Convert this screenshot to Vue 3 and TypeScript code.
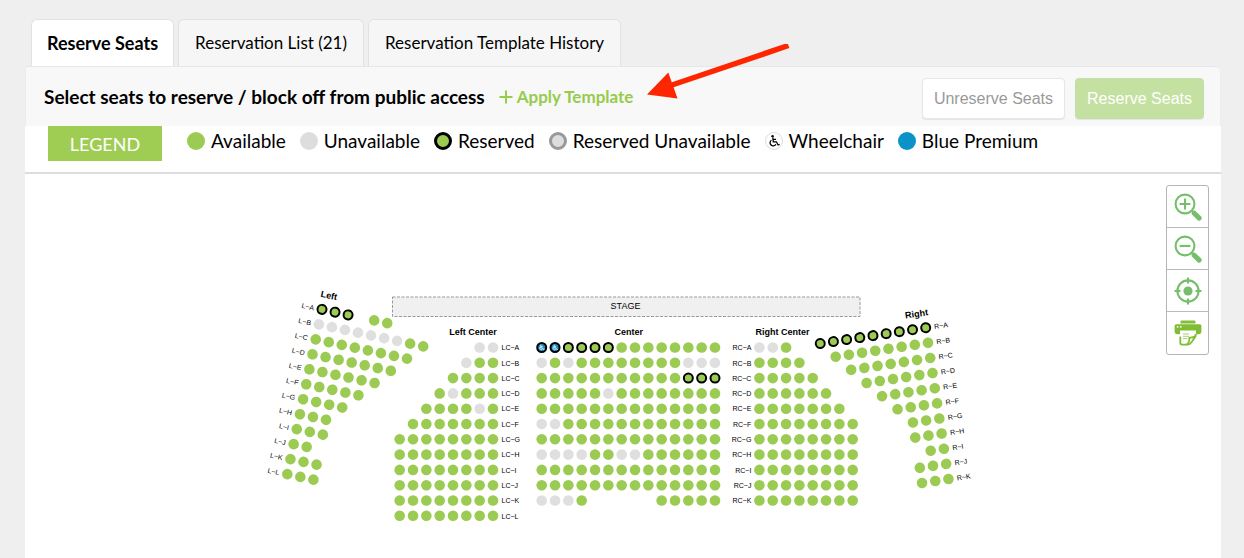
<script setup lang="ts">
import { ref } from 'vue'

type SeatKind = 'g' | 'u' | 'r' | 'w'
interface Seat { x: number; y: number; kind: SeatKind }
interface RowLabel { x: number; y: number; text: string }
interface Section {
  title: string
  titleX: number
  titleY: number
  transform: string
  anchor: 'start' | 'end'
  seats: Seat[]
  labels: RowLabel[]
}
interface SectionSpec {
  title: string
  titleX: number
  titleY: number
  x: number
  y: number
  angle: number
  prefix: string
  labelX: number
  anchor: 'start' | 'end'
  alignRight?: boolean
  rows: string[]
}

const SEAT_STEP = 13.33
const ROW_STEP = 15.3

// Row strings: g available, u unavailable, r reserved, w reserved wheelchair, . aisle
const specs: SectionSpec[] = [
  {
    title: 'Left', titleX: 4, titleY: -12, x: 322, y: 309.4, angle: 11.9,
    prefix: 'L', labelX: -8, anchor: 'end',
    rows: ['rrr.gg', 'uuuuuuugg', 'gggggggg', 'ggggggg', 'gggggg', 'ggggg', 'gggg', 'ggg', 'ggg', 'gg', 'ggg', 'ggg'],
  },
  {
    title: 'Left Center', titleX: -20, titleY: -12.5, x: 493, y: 347.5, angle: 0,
    prefix: 'LC', labelX: 8.5, anchor: 'start', alignRight: true,
    rows: ['uu', 'ugg', 'gggg', 'guggg', 'ggggug', 'ggggggg', 'gggggggg', 'gggggggg', 'gggggggg', 'gggggggg', 'gggggggg', 'gggggggg'],
  },
  {
    title: 'Center', titleX: 87, titleY: -12.5, x: 541.7, y: 347.5, angle: 0,
    prefix: '', labelX: 0, anchor: 'start',
    rows: ['wwrrrrgggggggg', 'ugugggggggguuu', 'gggggggggggrrr', 'gggggugggggggg', 'gggggggggggggg', 'uugggggggggggg', 'gggggggggggggg', 'uuuugguugggggg', 'gggggggggggggg', 'gggggggggggggg', 'uuug.....ggggg'],
  },
  {
    title: 'Right Center', titleX: 23, titleY: -12.5, x: 759.4, y: 347.5, angle: 0,
    prefix: 'RC', labelX: -8, anchor: 'end',
    rows: ['uug', 'gggg', 'ggggg', 'gggggg', 'ggggggg', 'gggggggg', 'gggggggg', 'gggggggg', 'gggggggg', 'gggggggg', 'gggggggg'],
  },
  {
    title: 'Right', titleX: -7, titleY: -12, x: 925.7, y: 327.7, angle: -8.55,
    prefix: 'R', labelX: 8.5, anchor: 'start', alignRight: true,
    rows: ['rrrrrrrrr', 'gggggggg', 'ggggggg', 'gggggg', 'ggggg', 'gggg', 'ggg', 'ggg', 'gg', 'ggg', 'ggg'],
  },
]

const sections: Section[] = specs.map((s) => {
  const seats: Seat[] = []
  const labels: RowLabel[] = []
  s.rows.forEach((row, i) => {
    const y = i * ROW_STEP
    row.split('').forEach((c, j) => {
      if (c === '.') return
      const col = s.alignRight ? j - row.length + 1 : j
      seats.push({ x: col * SEAT_STEP, y, kind: c as SeatKind })
    })
    if (s.prefix) labels.push({ x: s.labelX, y: y + 2.7, text: `${s.prefix}~${String.fromCharCode(65 + i)}` })
  })
  return {
    title: s.title, titleX: s.titleX, titleY: s.titleY, anchor: s.anchor, seats, labels,
    transform: `translate(${s.x} ${s.y}) rotate(${s.angle})`,
  }
})

const tabs = ['Reserve Seats', 'Reservation List (21)', 'Reservation Template History']
const activeTab = ref(0)

const legend = [
  { label: 'Available', cls: 'available' },
  { label: 'Unavailable', cls: 'unavailable' },
  { label: 'Reserved', cls: 'reserved' },
  { label: 'Reserved Unavailable', cls: 'reserved-unavailable' },
  { label: 'Wheelchair', cls: 'wheelchair' },
  { label: 'Blue Premium', cls: 'premium' },
]
</script>

<template>
  <main class="page">
    <nav class="tabs" role="tablist">
      <button
        v-for="(tab, i) in tabs"
        :key="tab"
        type="button"
        role="tab"
        class="tab"
        :class="{ active: activeTab === i }"
        :aria-selected="activeTab === i"
        @click="activeTab = i"
      >{{ tab }}</button>
    </nav>

    <section class="panel">
      <header class="bar">
        <h1 class="heading">Select seats to reserve / block off from public access</h1>
        <a class="apply" href="#apply">
          <svg class="plus" viewBox="0 0 14 14" aria-hidden="true"><path d="M7 .5v13M.5 7h13" /></svg>
          <span>Apply Template</span>
        </a>
        <div class="actions">
          <button type="button" class="btn plain" disabled>Unreserve Seats</button>
          <button type="button" class="btn primary" disabled>Reserve Seats</button>
        </div>
      </header>

      <div class="legend">
        <button type="button" class="legend-btn">LEGEND</button>
        <ul class="legend-list">
          <li v-for="item in legend" :key="item.cls">
            <span class="dot" :class="item.cls">
              <svg v-if="item.cls === 'wheelchair'" viewBox="0 0 12 12" aria-hidden="true">
                <circle cx="4.6" cy="1.3" r="1.2" fill="#000" stroke="none" />
                <path d="M4.800 2.600l.5 4.200h3.100l1.700 3.200 1.500-.7M5 4.400h3M3.400 5.200a3.100 3.100 0 1 0 4.500 4" />
              </svg>
            </span>
            <span>{{ item.label }}</span>
          </li>
        </ul>
      </div>

      <div class="map">
        <svg class="seats" viewBox="25 174 1196 384" role="img" aria-label="Seat map">
          <rect class="stage" x="392.5" y="297" width="467.5" height="19.5" />
          <text class="stage-text" x="625.5" y="309">STAGE</text>
          <g v-for="s in sections" :key="s.title" :transform="s.transform">
            <text class="title" :x="s.titleX" :y="s.titleY">{{ s.title }}</text>
            <text
              v-for="l in s.labels"
              :key="l.text"
              class="row-label"
              :x="l.x"
              :y="l.y"
              :text-anchor="s.anchor"
            >{{ l.text }}</text>
            <g v-for="(seat, i) in s.seats" :key="i">
              <circle
                :class="['seat', seat.kind]"
                :cx="seat.x"
                :cy="seat.y"
                :r="seat.kind === 'r' || seat.kind === 'w' ? 4.5 : 5.3"
              />
              <path
                v-if="seat.kind === 'w'"
                class="chair"
                :transform="`translate(${seat.x - 3} ${seat.y - 3})`"
                d="M2.1.2v3.2h1.8l1 1.8.8-.3M2.2 2h1.6M1.5 2.6a1.5 1.5 0 1 0 2.3 2.1"
              />
            </g>
          </g>
        </svg>

        <div class="tools">
          <button type="button" class="tool" aria-label="Zoom in">
            <svg viewBox="0 0 28 28">
              <circle cx="11" cy="11" r="9.4" class="line" />
              <path class="line" d="M11 5.600v10.800M5.600 11h10.800" />
              <path class="neck" d="M17.400 17.400l2.600 2.600" />
              <path class="handle" d="M20.200 20.200l5 4.900" />
            </svg>
          </button>
          <button type="button" class="tool" aria-label="Zoom out">
            <svg viewBox="0 0 28 28">
              <circle cx="11" cy="11" r="9.4" class="line" />
              <path class="line" d="M5.600 11h10.800" />
              <path class="neck" d="M17.400 17.400l2.600 2.600" />
              <path class="handle" d="M20.200 20.200l5 4.900" />
            </svg>
          </button>
          <button type="button" class="tool" aria-label="Reset view">
            <svg viewBox="0 0 28 28">
              <circle cx="14" cy="14" r="10.6" class="line" />
              <circle cx="14" cy="14" r="4.6" fill="#76bf6a" />
              <path class="line" d="M14 .5v6M14 21.500v6M.5 14h6M21.500 14h6" />
            </svg>
          </button>
          <button type="button" class="tool" aria-label="Print">
            <svg viewBox="0 0 28 28">
              <path fill="#84bd3c" d="M6.5 4.5V2.4q0-1 1-1h13q1 0 1 1v2.1z" />
              <path fill="#80bd35" d="M.6 6.8q0-1.6 1.6-1.6h23.6q1.6 0 1.6 1.6v6q0 2.4-2.4 2.4H22v-3.6H6v3.6H3q-2.4 0-2.4-2.4z" />
              <circle cx="3.6" cy="7.8" r=".9" fill="#fff" />
              <circle cx="6.8" cy="7.8" r=".9" fill="#fff" />
              <path fill="none" stroke="#80bd35" stroke-width="1.8" stroke-linejoin="round" d="M6.300 17.600v6.200q0 1.800 1.800 1.800h5.200q2.800-.2 4.200-2.400 2.200-2.800 4.200-6.200v-2" />
              <path fill="none" stroke="#80bd35" stroke-width="1.800" stroke-linejoin="round" d="M12.800 25.400q2.800-1.600 2.600-6.800 3.600.4 6.200-1.600" />
              <path fill="none" stroke="#9dca66" stroke-width=".9" d="M9 15h6M9 17.300h6M9 19.600h4.500" />
            </svg>
          </button>
        </div>
      </div>
    </section>

    <svg class="arrow" viewBox="0 0 144 56" aria-hidden="true">
      <path d="M142.500 1.500L26 41" fill="none" stroke="#fe2600" stroke-width="5.500" />
      <path d="M1 50.500L22.300 28.500 31.500 54.500z" fill="#fe2600" />
    </svg>
  </main>
</template>

<style>
body {
  margin: 0;
  background: #efefef;
}
</style>

<style scoped>
.page {
  position: relative;
  box-sizing: border-box;
  min-height: 100vh;
  display: flex;
  flex-direction: column;
  padding: 19px 23px 0 25px;
  overflow: hidden;
  color: #000;
  font-family: Lato, "Open Sans", sans-serif;
}
.tabs {
  display: flex;
  gap: 4px;
  padding-left: 6px;
}
.tab {
  height: 47px;
  padding: 0 16px;
  border: 1px solid #e1e2e2;
  border-bottom: 0;
  border-radius: 6px 6px 0 0;
  background: #f6f6f6;
  color: #000;
  font: 400 17px/24px Lato, "Open Sans", sans-serif;
  cursor: pointer;
}
.tab.active {
  padding: 0 15px;
  background: #fff;
  font-size: 18px;
  font-weight: 700;
}
.panel {
  flex: 1;
  display: flex;
  flex-direction: column;
  background: #fff;
  border-radius: 0 6px 0 0;
}
.bar {
  box-sizing: border-box;
  min-height: 60px;
  display: flex;
  align-items: center;
  padding: 0 16px 0 18px;
  border: 1px solid #ebeced;
  border-top-color: #e6e8e8;
  border-bottom: 0;
  border-radius: 0 6px 0 0;
  background: #f8f8f8;
}
.heading {
  margin: 0;
  font-size: 19px;
  line-height: 24px;
  font-weight: 700;
}
.apply {
  display: flex;
  align-items: center;
  gap: 4px;
  margin-left: 14px;
  color: #97cb4d;
  font-size: 17px;
  line-height: 24px;
  font-weight: 700;
  text-decoration: none;
}
.plus {
  width: 14px;
  height: 14px;
  fill: none;
  stroke: #97cb4d;
  stroke-width: 2;
}
.actions {
  display: flex;
  gap: 10px;
  margin-left: auto;
  padding-top: 4px;
}
.btn {
  box-sizing: border-box;
  height: 41px;
  padding: 0 11px;
  border: 1px solid #e3e8e8;
  border-radius: 4px;
  box-shadow: 0 1px 1px rgba(0, 0, 0, 0.08);
  font: 16px/20px "Liberation Sans", Arial, sans-serif;
}
.plain {
  background: #fff;
  color: #999;
}
.primary {
  border-color: #c3dfa8;
  background: #c5e1a2;
  color: #fff;
}
.legend {
  display: flex;
  align-items: flex-start;
  gap: 25px;
  padding: 0 23px 11px;
  border-bottom: 2px solid #ddd;
}
.legend-btn {
  height: 35px;
  width: 114px;
  padding: 0;
  border: 0;
  background: #9fcd54;
  color: #fff;
  font: 400 18px/24px Lato, "Open Sans", sans-serif;
}
.legend-list {
  display: flex;
  flex-wrap: wrap;
  gap: 4px 14px;
  margin: 3px 0 0;
  padding: 0;
  list-style: none;
  font-size: 19px;
  line-height: 24px;
}
.legend-list li {
  display: flex;
  align-items: center;
  gap: 6px;
}
.dot {
  box-sizing: border-box;
  display: flex;
  align-items: center;
  justify-content: center;
  width: 18px;
  height: 18px;
  border-radius: 50%;
}
.available {
  background: #9ccb54;
}
.unavailable {
  background: #ddd;
}
.reserved {
  border: 3px solid #000;
  background: #9ccb54;
}
.reserved-unavailable {
  border: 3px solid #999;
  background: #ddd;
}
.wheelchair {
  border: 1px solid #ddd;
  background: #fff;
}
.wheelchair svg {
  width: 12px;
  height: 12px;
  fill: none;
  stroke: #000;
  stroke-width: 1.3;
}
.premium {
  background: #0993c9;
}
.map {
  position: relative;
  flex: 1;
}
.seats {
  display: block;
  width: 100%;
  font-family: "Liberation Sans", Arial, sans-serif;
}
.stage {
  fill: #f0f0f0;
  stroke: #999;
  stroke-dasharray: 3 1.5;
}
.stage-text {
  font-size: 9px;
  text-anchor: middle;
}
.title {
  font-size: 9px;
  font-weight: 700;
  text-anchor: middle;
}
.row-label {
  font-size: 7px;
  fill: #000;
}
.seat.g {
  fill: #9ccb54;
}
.seat.u {
  fill: #dfdfdf;
}
.seat.r {
  fill: #9ccb54;
  stroke: #000;
  stroke-width: 2;
}
.seat.w {
  fill: #1b93c8;
  stroke: #000;
  stroke-width: 2;
}
.chair {
  fill: none;
  stroke: #fff;
  stroke-width: 0.8;
}
.tools {
  position: absolute;
  top: 11px;
  right: 12px;
  display: flex;
  flex-direction: column;
  border: 1px solid #b5b5b5;
  border-radius: 3px;
  background: #fff;
}
.tool {
  display: flex;
  align-items: center;
  justify-content: center;
  width: 41px;
  height: 42px;
  padding: 0;
  border: 0;
  border-bottom: 1px solid #bbb;
  background: none;
  cursor: pointer;
}
.tool:last-child {
  border-bottom: 0;
}
.tool svg {
  width: 28px;
  height: 28px;
}
.line {
  fill: none;
  stroke: #76bf6a;
  stroke-width: 2.1;
}
.neck {
  fill: none;
  stroke: #76bf6a;
  stroke-width: 2.2;
}
.handle {
  fill: none;
  stroke: #76bf6a;
  stroke-width: 5;
  stroke-linecap: round;
}
.arrow {
  position: absolute;
  left: 646px;
  top: 44px;
  width: 144px;
  height: 56px;
  pointer-events: none;
}
</style>
